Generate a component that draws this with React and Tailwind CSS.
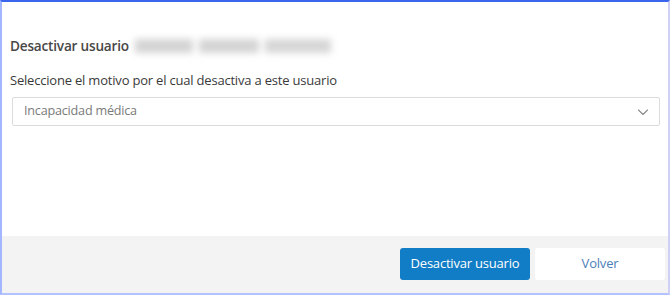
import React, { useState } from 'react';

const ChevronDown = () => (
  <svg width="12" height="12" viewBox="0 0 12 12" fill="none" className="text-[#8a8a8a]">
    <path d="M1.5 4l4.5 4.5L10.5 4" stroke="currentColor" strokeWidth="1.1" strokeLinecap="round" strokeLinejoin="round" />
  </svg>
);

const App = () => {
  const [motivo] = useState('Incapacidad médica');

  return (
    <div
      className="w-[670px] h-[295px] flex flex-col bg-white border-t-2 border-t-[#3a66ee] border-l-2 border-l-[#a4b6ff] border-r-2 border-r-[#cfd0f4] border-b-2 border-b-[#b4c2ff] overflow-hidden"
      style={{ fontFamily: '"Open Sans", "Noto Sans", sans-serif' }}
    >
      {/* Body */}
      <div className="flex-1 flex flex-col pl-2 pr-[8px] pt-[34px]">
        <div className="flex items-center h-[20px]">
          <span className="text-[13.6px] font-semibold text-[#474747] tracking-[-0.2px]">Desactivar usuario</span>
          <div className="flex items-center gap-[6px] ml-[6px] blur-[3.5px]">
            <div className="w-[58px] h-[14px] bg-[#d4d4d4]" />
            <div className="w-[60px] h-[14px] bg-[#d4d4d4]" />
            <div className="w-[66px] h-[14px] bg-[#d6d6d6]" />
          </div>
        </div>

        <p className="mt-[16px] text-[13px] text-[#3a3a3a] tracking-[-0.2px] leading-[16px]">
          Seleccione el motivo por el cual desactiva a este usuario
        </p>

        <div className="mt-[9px] ml-[2px] h-[29px] flex items-center justify-between border border-[#dcdcdc] rounded-[2px] pl-[11px] pr-[10px]">
          <span className="text-[12.6px] text-[#7a7a7a] tracking-[-0.2px]">{motivo}</span>
          <ChevronDown />
        </div>
      </div>

      {/* Footer */}
      <div className="h-[57px] bg-[#f3f3f3] flex items-center justify-end gap-[5px] pr-[3px] pb-[2px]">
        <button className="w-[130px] h-[32px] rounded-[3px] bg-[#117dc6] text-white text-[13px] tracking-[-0.2px]">
          Desactivar usuario
        </button>
        <button className="w-[130px] h-[32px] rounded-[3px] bg-white text-[#4d80b8] text-[13px] tracking-[-0.2px]">
          Volver
        </button>
      </div>
    </div>
  );
};

export default App;
